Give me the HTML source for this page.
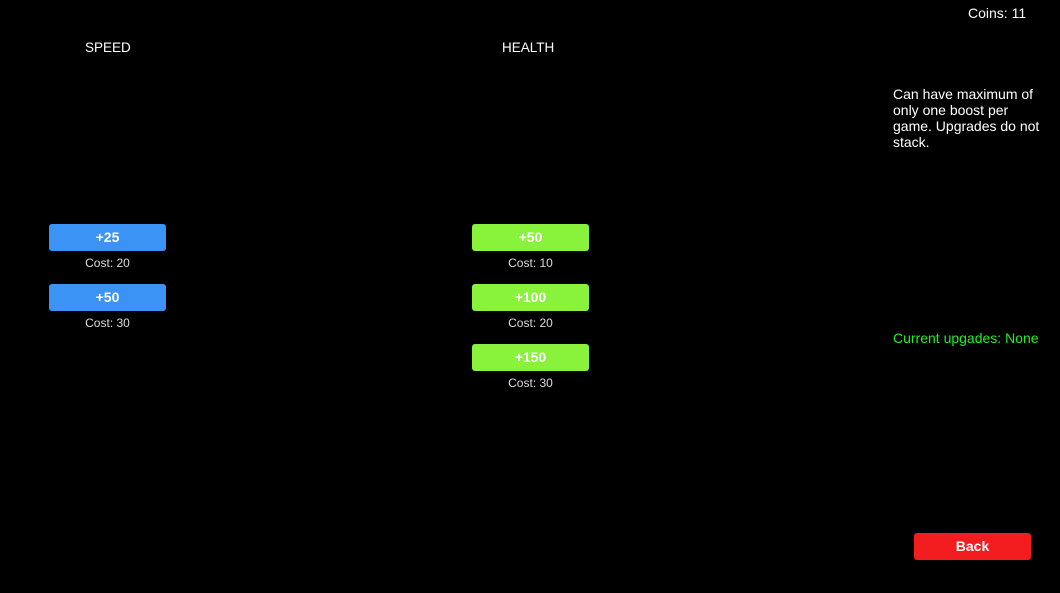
<!DOCTYPE html>
<html><head><style>
body{margin:0;width:1060px;height:593px;background:#000;position:relative;overflow:hidden;font-family:"Liberation Sans",Arial,sans-serif;color:#fff}
.t{position:absolute;font-size:14px;white-space:nowrap}
.b{position:absolute;width:117px;height:27px;border-radius:3px;font-weight:bold;font-size:14px;text-align:center;line-height:27px;color:#fff}
.bl{background:#3c93f6}.gr{background:#89f33b}.rd{background:#f31c1e}
.c{position:absolute;width:117px;text-align:center;font-size:12px;color:#ddd}
</style></head><body>
<div class="t" style="left:968px;top:5px">Coins: 11</div>
<div class="t" style="left:85px;top:40px;font-size:13.5px">SPEED</div>
<div class="t" style="left:502px;top:40px;font-size:13.5px">HEALTH</div>
<div class="t" style="left:893px;top:86px;white-space:normal;width:152px;line-height:16px">Can have maximum of only one boost per game. Upgrades do not stack.</div>
<div class="t" style="left:893px;top:330px;color:#22ee22">Current upgades: None</div>
<div class="b bl" style="left:49px;top:224px">+25</div><div class="c" style="left:49px;top:256px">Cost: 20</div>
<div class="b bl" style="left:49px;top:284px">+50</div><div class="c" style="left:49px;top:316px">Cost: 30</div>
<div class="b gr" style="left:472px;top:224px">+50</div><div class="c" style="left:472px;top:256px">Cost: 10</div>
<div class="b gr" style="left:472px;top:284px">+100</div><div class="c" style="left:472px;top:316px">Cost: 20</div>
<div class="b gr" style="left:472px;top:344px">+150</div><div class="c" style="left:472px;top:376px">Cost: 30</div>
<div class="b rd" style="left:914px;top:533px">Back</div>
</body></html>
